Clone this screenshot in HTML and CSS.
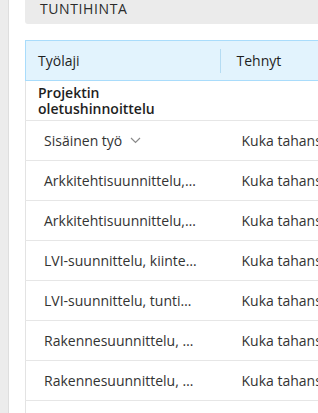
FILE: index.html
```html
<!DOCTYPE html>
<html lang="fi">
<head>
<meta charset="UTF-8" />
<meta name="viewport" content="width=device-width, initial-scale=1" />
<title>Tuntihinta</title>
<link rel="stylesheet" href="styles.css">
</head>
<body>
  <div class="side-panel"></div>

  <main class="content">
    <!-- Section header -->
    <div class="section-title">TUNTIHINTA</div>

    <!-- Hourly price table -->
    <table class="price-table">
      <colgroup>
        <col class="col-worktype">
        <col class="col-who">
      </colgroup>
      <thead>
        <tr>
          <th><span class="th-label">Työlaji</span></th>
          <th><span class="th-label">Tehnyt</span></th>
        </tr>
      </thead>
      <tbody>
        <tr class="group-row">
          <td>Projektin oletushinnoittelu</td>
          <td></td>
        </tr>
        <tr>
          <td>Sisäinen työ
            <svg class="chevron" width="11" height="7" viewBox="0 0 11 7" aria-hidden="true">
              <path d="M1 1 L5.5 5.5 L10 1" fill="none" stroke="#8a8a8a" stroke-width="1.2"/>
            </svg>
          </td>
          <td>Kuka tahansa</td>
        </tr>
        <tr>
          <td>Arkkitehtisuunnittelu, kiinteä hinta</td>
          <td>Kuka tahansa</td>
        </tr>
        <tr>
          <td>Arkkitehtisuunnittelu, tuntihinta</td>
          <td>Kuka tahansa</td>
        </tr>
        <tr>
          <td>LVI-suunnittelu, kiinteä hinta</td>
          <td>Kuka tahansa</td>
        </tr>
        <tr>
          <td>LVI-suunnittelu, tuntihinta</td>
          <td>Kuka tahansa</td>
        </tr>
        <tr>
          <td>Rakennesuunnittelu, kiinteä hinta</td>
          <td>Kuka tahansa</td>
        </tr>
        <tr>
          <td>Rakennesuunnittelu, tuntihinta</td>
          <td>Kuka tahansa</td>
        </tr>
        <tr>
          <td>Sähkösuunnittelu, kiinteä hinta</td>
          <td>Kuka tahansa</td>
        </tr>
      </tbody>
    </table>
  </main>
</body>
</html>
```

FILE: styles.css
```css
/* Reset and base styles */
* {
  margin: 0;
  padding: 0;
  box-sizing: border-box;
}
html, body {
  height: 100%;
}
body {
  font-family: 'Open Sans', 'Liberation Sans', sans-serif;
  font-size: 14px;
  color: #222;
  background: #fff;
  display: flex;
  overflow: hidden;
}

/* Left grey panel edge */
.side-panel {
  flex: 0 0 9px;
  background: #ececec;
  border-right: 1px solid #dedede;
}

.content {
  flex: 1 0 auto;
  padding-left: 16px;
}

/* Section title bar */
.section-title {
  height: 24px;
  background: #ebebeb;
  border-bottom-left-radius: 3px;
  padding: 0 15px;
  line-height: 17px;
  font-size: 14px;
  letter-spacing: 0.6px;
  color: #2b2b2b;
  width: 600px;
}

/* Table */
.price-table {
  margin-top: 16px;
  width: 600px;
  table-layout: fixed;
  border-collapse: collapse;
  border-left: 1px solid #e3e3e3;
}
.col-worktype {
  width: 195px;
}
.price-table thead tr {
  background: #e2f3fd;
  border: 1px solid #a9dcfb;
}
.price-table th {
  height: 40px;
  text-align: left;
  font-weight: 400;
  color: #1e1e1e;
  padding: 0 12px;
}
.price-table th:first-child {
  position: relative;
}
.price-table th:first-child::after {
  content: "";
  position: absolute;
  right: 0;
  top: 8px;
  bottom: 7px;
  width: 1px;
  background: #b5dcf3;
}
.price-table th:nth-child(2) {
  padding-left: 16px;
}

.price-table td {
  height: 40px;
  border-bottom: 1px solid #e6e6e6;
  padding: 0 23px 0 18px;
  white-space: nowrap;
  overflow: hidden;
  text-overflow: ellipsis;
  color: #333;
}
.price-table td:nth-child(2) {
  padding-left: 21px;
}

.group-row td {
  font-weight: 600;
  white-space: normal;
  color: #1e1e1e;
  padding-left: 12px;
  line-height: 16px;
}

.chevron {
  margin-left: 4px;
  vertical-align: 2px;
}
```
